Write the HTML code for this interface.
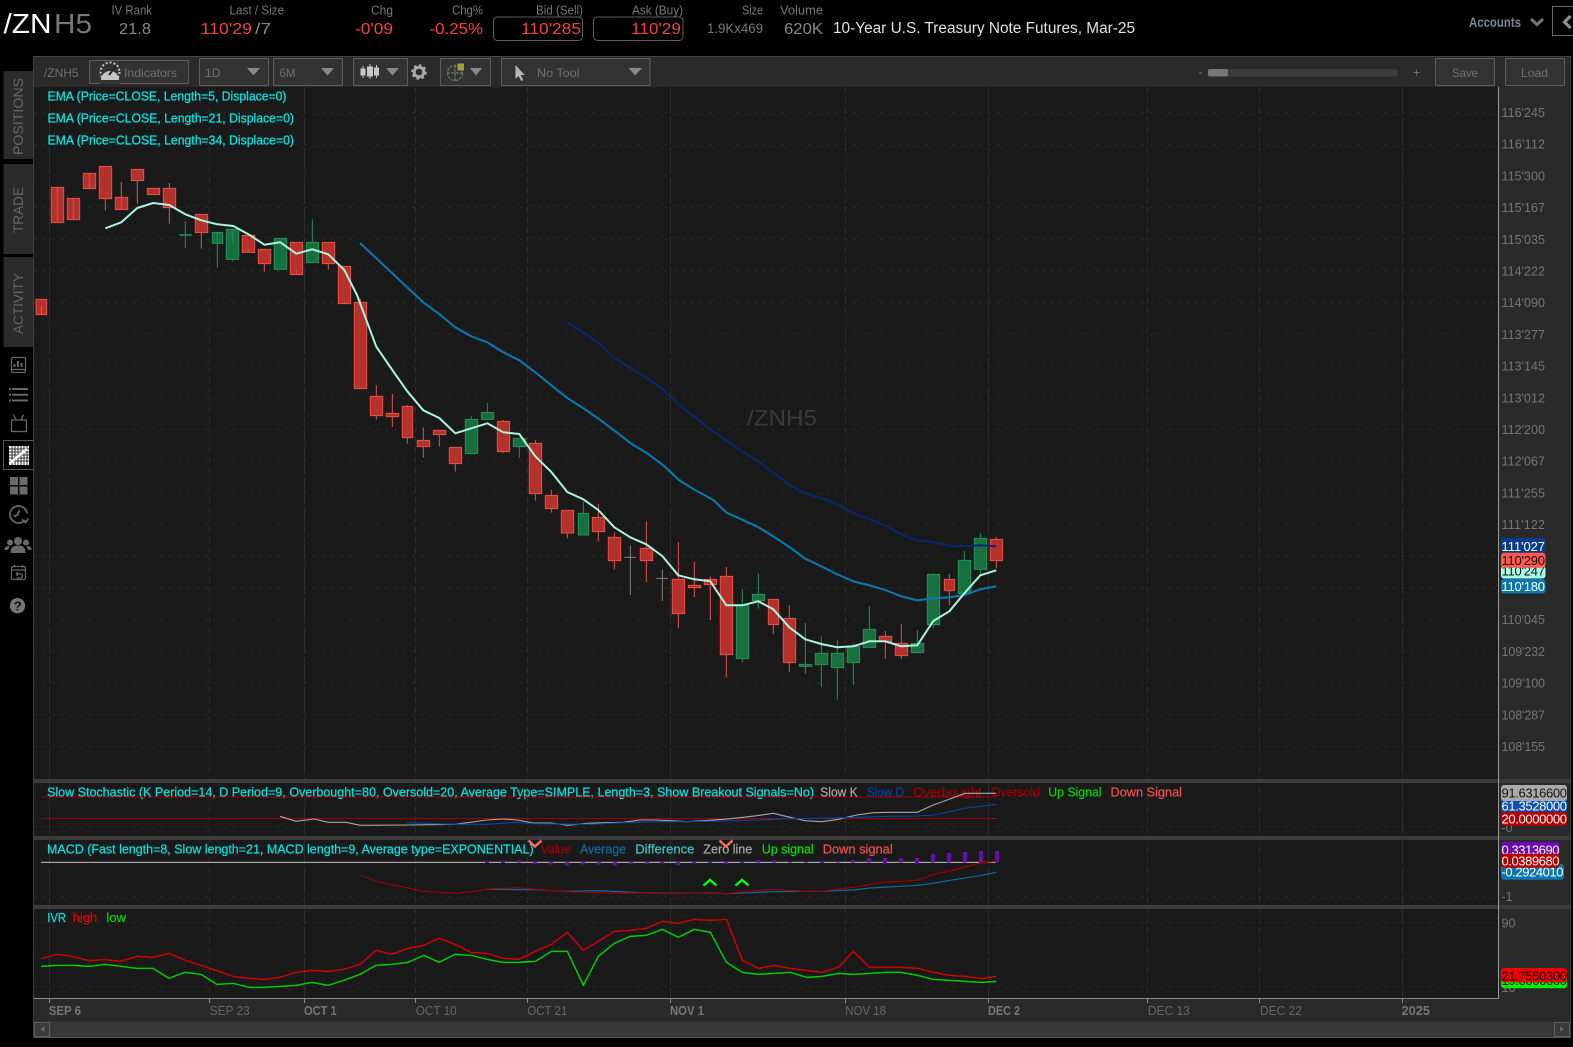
<!DOCTYPE html>
<html>
<head>
<meta charset="utf-8">
<title>/ZNH5 chart</title>
<style>
html,body{margin:0;padding:0;background:#000;width:1573px;height:1047px;overflow:hidden}
svg{display:block}
text{font-family:"Liberation Sans",sans-serif}
.lb{font-size:12.5px;fill:#777}
.v{font-size:16px;fill:#888}
.r{font-size:16px;fill:#f6423a}
.tb{font-size:12px;fill:#707070}
.ema{font-size:12.5px;fill:#00e6e6;stroke:#00e6e6;stroke-width:.25px}
.px{font-size:12.5px;fill:#757575}
.d{font-size:12.5px;fill:#666}
.db{font-size:12.5px;fill:#777;font-weight:bold}
.f{font-size:13px}
.leg{font-size:13px;stroke:currentColor;stroke-width:.2px}
.side{font-size:14px;fill:#666}
.rb{fill:#b5312b;stroke:#ea5048;stroke-width:3}
.gb{fill:#19703f;stroke:#23915a;stroke-width:3}
.rw{fill:none;stroke:#ea5048;stroke-width:3}
.gw{fill:none;stroke:#1f9058;stroke-width:3}
.hw{fill:none;stroke:#808080;stroke-width:3}
.pl{fill:none;stroke-linejoin:round;vector-effect:non-scaling-stroke}
.box{fill:#333;stroke:#5c5c5c;stroke-width:1}
.tri{fill:#8a8a8a}
.ic{fill:#6a6a6a}
</style>
</head>
<body>
<svg width="1573" height="1047" viewBox="0 0 1573 1047" xmlns="http://www.w3.org/2000/svg">
<rect width="1573" height="1047" fill="#000"/>

<!-- Header -->
<text x="3.5" y="33" font-size="28" fill="#fff" textLength="48" lengthAdjust="spacingAndGlyphs">/ZN</text>
<text x="54" y="33" font-size="28" fill="#777" textLength="38" lengthAdjust="spacingAndGlyphs">H5</text>
<text class="lb" x="111.5" y="14.5" textLength="40.5" lengthAdjust="spacingAndGlyphs">IV Rank</text>
<text class="v" x="119" y="34" textLength="32" lengthAdjust="spacingAndGlyphs">21.8</text>
<text class="lb" x="229.5" y="14.5" textLength="54.5" lengthAdjust="spacingAndGlyphs">Last / Size</text>
<text class="r" x="200.5" y="34" textLength="51.5" lengthAdjust="spacingAndGlyphs">110'29</text>
<text class="v" x="255" y="34" textLength="16" lengthAdjust="spacingAndGlyphs">/7</text>
<text class="lb" x="371" y="14.5" textLength="22" lengthAdjust="spacingAndGlyphs">Chg</text>
<text class="r" x="355" y="34" textLength="38" lengthAdjust="spacingAndGlyphs">-0'09</text>
<text class="lb" x="452" y="14.5" textLength="31" lengthAdjust="spacingAndGlyphs">Chg%</text>
<text class="r" x="429.5" y="34" textLength="53.5" lengthAdjust="spacingAndGlyphs">-0.25%</text>
<text class="lb" x="536" y="14.5" textLength="47" lengthAdjust="spacingAndGlyphs">Bid (Sell)</text>
<rect x="493.5" y="17" width="89" height="23.5" rx="4" fill="none" stroke="#5e5e5e"/>
<text class="r" x="521" y="34" textLength="60" lengthAdjust="spacingAndGlyphs">110'285</text>
<text class="lb" x="632" y="14.5" textLength="51" lengthAdjust="spacingAndGlyphs">Ask (Buy)</text>
<rect x="593.5" y="17" width="89.5" height="23.5" rx="4" fill="none" stroke="#5e5e5e"/>
<text class="r" x="631" y="34" textLength="50" lengthAdjust="spacingAndGlyphs">110'29</text>
<text class="lb" x="742" y="14.5" textLength="21" lengthAdjust="spacingAndGlyphs">Size</text>
<text x="707" y="33" font-size="13.5" fill="#777" textLength="56" lengthAdjust="spacingAndGlyphs">1.9Kx469</text>
<text class="lb" x="780" y="14.5" textLength="43" lengthAdjust="spacingAndGlyphs">Volume</text>
<text class="v" x="784" y="34" textLength="39" lengthAdjust="spacingAndGlyphs">620K</text>
<text x="833" y="33" font-size="15.5" fill="#e2e2e2" textLength="302" lengthAdjust="spacingAndGlyphs">10-Year U.S. Treasury Note Futures, Mar-25</text>
<text x="1469" y="27" font-size="14" font-weight="bold" fill="#7a8794" textLength="52" lengthAdjust="spacingAndGlyphs">Accounts</text>
<path d="M1531 19l6 5.5l6-5.5" fill="none" stroke="#6f7478" stroke-width="3.2"/>
<rect x="1552.5" y="6.5" width="30" height="29" fill="none" stroke="#6a6a6a"/>
<path d="M1570.5 16l-6 6l6 6" fill="none" stroke="#8a8f94" stroke-width="3.2"/>

<!-- Sidebar tabs -->
<rect x="3.5" y="71" width="29.5" height="88" fill="#2b2b2b"/>
<rect x="3.5" y="164" width="29.5" height="90" fill="#2b2b2b"/>
<rect x="3.5" y="257" width="29.5" height="90" fill="#2b2b2b"/>
<text class="side" transform="translate(23,155) rotate(-90)" textLength="77" lengthAdjust="spacingAndGlyphs">POSITIONS</text>
<text class="side" transform="translate(23,233) rotate(-90)" textLength="46" lengthAdjust="spacingAndGlyphs">TRADE</text>
<text class="side" transform="translate(23,334) rotate(-90)" textLength="61" lengthAdjust="spacingAndGlyphs">ACTIVITY</text>

<!-- Sidebar icons -->
<g fill="none" stroke="#666" stroke-width="1.3">
<rect x="11.5" y="357.5" width="14" height="15" rx="1.5"/>
<path d="M14.5 367v-3M18 367v-6M21.5 367v-4" stroke-width="2"/>
<path d="M11.5 369.5h14"/>
<path d="M12 389h16M12 394.8h16M12 400.5h16" stroke-width="2"/>
<path d="M9 389h2M9 394.8h2M9 400.5h2" stroke-width="2"/>
<rect x="11.5" y="420" width="15" height="11.5"/>
<path d="M16 420l-2.5-5.5M21 420l2.5-5.5"/>
</g>
<rect x="3.5" y="440.5" width="30" height="29" fill="#000" stroke="#555"/>
<rect x="33" y="441" width="2" height="28" fill="#000"/>
<g>
<rect x="9" y="446" width="20" height="19" fill="#fff"/>
<path d="M12 446v19M15 446v19M18 446v19M21 446v19M24 446v19M27 446v19M9 449h20M9 452h20M9 455h20M9 458h20M9 461h20" stroke="#333" stroke-width="1"/>
<path d="M10 463l17-14" stroke="#fff" stroke-width="2.6"/>
</g>
<g class="ic">
<rect x="10" y="477" width="8" height="8" class="ic"/><rect x="19.5" y="477" width="8" height="8" class="ic"/>
<rect x="10" y="486.5" width="8" height="8" class="ic"/><rect x="19.5" y="486.5" width="8" height="8" class="ic"/>
</g>
<g fill="none" stroke="#666" stroke-width="1.8">
<path d="M25 520a8.5 8.5 0 1 1 2-6.5"/>
<path d="M19.5 510l-2 5l-4 1.5"/>
<path d="M22 519.5l3.5 3l3-4"/>
</g>
<g fill="#6a6a6a">
<circle cx="18" cy="541" r="4"/><path d="M10.5 553c0-5 2-7.5 7.5-7.5s7.5 2.5 7.5 7.5z"/>
<circle cx="10" cy="542.5" r="3"/><path d="M4 549.5c1-3 3-3.5 5.5-3.5l-1.5 4z"/>
<circle cx="26" cy="542.5" r="3"/><path d="M32 549.5c-1-3-3-3.5-5.5-3.5l1.5 4z"/>
</g>
<g fill="none" stroke="#666" stroke-width="1.3">
<rect x="11.5" y="566.5" width="14" height="13" rx="1.5"/>
<path d="M11.5 570h14M14.5 565v2.5M22.5 565v2.5"/>
<path d="M16 574h4.5a2 2 0 0 1 0 4h-4M16 574l2-1.8M16 574l2 1.8"/>
</g>
<circle cx="17.5" cy="605.7" r="7.7" fill="#777"/>
<text x="13.8" y="610.5" font-size="13" font-weight="bold" fill="#111">?</text>

<!-- Panel base -->
<rect x="33" y="56" width="1538" height="982" fill="#2a2a2a"/>
<rect x="33" y="56" width="1538" height="1" fill="#444"/>
<rect x="34" y="87" width="1464.5" height="911.5" fill="#1a1a1a"/>
<rect x="33" y="56" width="1" height="982" fill="#3f3f3f"/>
<rect x="1570" y="56" width="1" height="982" fill="#3a3a3a"/>

<!-- Grid -->
<g stroke="#2d2d2d" stroke-width="1" fill="none">
<path stroke-dasharray="27 3" d="M49.5 87V998M304.5 87V998M670.5 87V998M988.5 87V998M1402.5 87V998"/>
<path stroke-dasharray="6 4" d="M209.5 87V998M415.5 87V998M527.5 87V998M845.5 87V998M1147.5 87V998M1259.5 87V998"/>
<path stroke="#292929" stroke-dasharray="3 6" d="M34 112.5H1498M34 144.5H1498M34 176H1498M34 207.5H1498M34 239.5H1498M34 271H1498M34 303H1498M34 334.5H1498M34 366H1498M34 398H1498M34 429.5H1498M34 461H1498M34 493H1498M34 524.5H1498M34 556H1498M34 588H1498M34 619.5H1498M34 651H1498M34 683H1498M34 714.5H1498M34 746.5H1498M34 826.5H1498M34 896.5H1498M34 922.5H1498M34 986.5H1498"/>
</g>
<text x="747" y="425.5" font-size="22" fill="#3b3b3b" textLength="70" lengthAdjust="spacingAndGlyphs">/ZNH5</text>

<!-- Toolbar -->
<text class="tb" x="44" y="77" textLength="34.5" lengthAdjust="spacingAndGlyphs">/ZNH5</text>
<rect class="box" x="89.5" y="60.5" width="99" height="23"/>
<path d="M101 80a9 9 0 1 1 18 0z" fill="#c4c4c4"/>
<circle cx="110" cy="72" r="9.5" fill="none" stroke="#c4c4c4" stroke-width="2" stroke-dasharray="2 2"/>
<path d="M109 75l7-9" stroke="#2a2a2a" stroke-width="2"/>
<rect x="100" y="80" width="20" height="4" fill="#333"/>
<text class="tb" x="124" y="77" textLength="53" lengthAdjust="spacingAndGlyphs">Indicators</text>
<rect class="box" x="199.5" y="58.5" width="69" height="27"/>
<text class="tb" x="205" y="77" textLength="15.5" lengthAdjust="spacingAndGlyphs">1D</text>
<path class="tri" d="M247 68h13l-6.5 7.500z"/>
<rect class="box" x="273.5" y="58.5" width="69" height="27"/>
<text class="tb" x="279.5" y="77" textLength="16" lengthAdjust="spacingAndGlyphs">6M</text>
<path class="tri" d="M321 68h13l-6.5 7.500z"/>
<rect class="box" x="353.5" y="58.5" width="54" height="27"/>
<g stroke="#c8c8c8" stroke-width="1">
<path d="M363 66v12M370 64v15M376.5 65v13"/>
<rect x="361" y="69" width="4" height="6" fill="#c8c8c8"/>
<rect x="367.5" y="67" width="5" height="9" fill="#c8c8c8"/>
<rect x="374.5" y="68" width="4" height="7" fill="#c8c8c8"/>
</g>
<path class="tri" d="M386 68h13l-6.5 7.500z"/>
<circle cx="419" cy="72" r="4.8" fill="none" stroke="#a8a8a8" stroke-width="3"/>
<circle cx="419" cy="72" r="6.7" fill="none" stroke="#a8a8a8" stroke-width="2.2" stroke-dasharray="2.6 2.6"/>
<rect class="box" x="440.5" y="58.5" width="50" height="27"/>
<g fill="none" stroke="#6f7c74" stroke-width="1.2" stroke-dasharray="3 1.2">
<circle cx="455" cy="73" r="7.5"/>
<path d="M447 73h16M455 65v16"/>
</g>
<rect x="457.5" y="63.5" width="6.5" height="7" fill="#a8a030"/>
<path d="M470 68h12l-6 7.500z" class="tri"/>
<rect class="box" x="501.5" y="58.5" width="148.5" height="27"/>
<path d="M515.5 65v14l3-3l2.8 5l2-1l-2.6-5h4z" fill="#b8b8b8"/>
<text class="tb" x="537" y="77" textLength="42.5" lengthAdjust="spacingAndGlyphs">No Tool</text>
<path class="tri" d="M628.5 68h13.500l-6.700 7.500z"/>
<text x="1198.5" y="76" font-size="12" fill="#777">-</text>
<rect x="1208" y="69" width="190" height="7.5" rx="3" fill="#3c3c3c"/>
<rect x="1208" y="69" width="20" height="7.5" rx="2" fill="#777"/>
<text x="1413" y="76.5" font-size="12" fill="#777">+</text>
<rect class="box" x="1435.5" y="58.5" width="59" height="27"/>
<text class="tb" x="1452" y="77" textLength="26" lengthAdjust="spacingAndGlyphs">Save</text>
<rect class="box" x="1505.5" y="58.5" width="59" height="27"/>
<text class="tb" x="1521" y="77" textLength="27" lengthAdjust="spacingAndGlyphs">Load</text>

<!-- Study labels -->
<text class="ema" x="47.5" y="100.5" textLength="239" lengthAdjust="spacingAndGlyphs">EMA (Price=CLOSE, Length=5, Displace=0)</text>
<text class="ema" x="47.5" y="122.5" textLength="246.5" lengthAdjust="spacingAndGlyphs">EMA (Price=CLOSE, Length=21, Displace=0)</text>
<text class="ema" x="47.5" y="144.5" textLength="246.5" lengthAdjust="spacingAndGlyphs">EMA (Price=CLOSE, Length=34, Displace=0)</text>

<!-- Candles A -->
<g transform="translate(30,160) scale(.33333)">
<path class="rb" d="M18 418h32v46h-32zM64 82h37v106h-37zM112 115h37v64h-37zM160 40h37v46h-37zM208 19h37v97h-37zM256 112h37v37h-37zM304 28h37v34h-37zM352 85h37v19h-37zM400 85h37v58h-37zM496 163h37v55h-37zM637 226h37v51h-37zM685 268h37v43h-37zM781 247h37v97h-37zM877 247h37v64h-37zM925 319h37v112h-37z"/>
<path class="rw" d="M34 438V464M82 82V188M130 115V179M178 40V86M226 116V152M274 66V149M322 62V131M418 69V85M418 143V191M514 218V266M655 268V277M703 311V335M799 332V344M895 311V329M943 426V431"/>
<path class="gb" d="M547 217h31v33h-31zM589 208h37v90h-37zM733 235h37v93h-37zM829 247h37v61h-37z"/>
<path class="gw" d="M466 184V264M562 217V323M607 208V248M607 298V305M847 178V247"/>
<path d="M448 225h37" stroke="#1f9058" stroke-width="5" fill="none"/>
</g>
<!-- Candles B -->
<g transform="translate(350,290) scale(.33333)">
<path class="rb" d="M13 37h37v259h-37zM61 319h37v58h-37zM109 370h37v10h-37zM157 349h31v94h-31zM202 451h37v19h-37zM250 421h37v13h-37zM298 472h37v49h-37zM442 394h37v91h-37zM538 460h37v151h-37zM586 616h37v40h-37zM634 661h37v68h-37z"/>
<path class="rw" d="M31 27V37M79 286V319M79 377V389M127 312V370M127 380V411M172 345V349M172 443V461M220 412V451M220 470V503M268 434V470M316 521V545M460 390V394M460 485V489M556 450V460M556 611V632M604 600V616M604 656V668M652 729V745"/>
<path class="gb" d="M346 388h37v103h-37zM394 367h37v21h-37zM490 445h37v25h-37zM685 670h31v65h-31z"/>
<path class="gw" d="M364 379V388M412 339V367M508 470V503M700 635V670"/>
</g>
<!-- Candles C -->
<g transform="translate(590,500) scale(.33333)">
<path class="rb" d="M7 52h37v43h-37zM55 112h37v70h-37zM151 145h37v37h-37zM247 238h37v103h-37zM295 256h37v7h-37zM343 238h37v16h-37zM391 229h37v235h-37zM535 298h31v76h-31zM580 355h37v133h-37zM868 409h37v15h-37zM916 430h37v37h-37zM1063 238h31v34h-31zM1201 118h37v64h-37z"/>
<path class="rw" d="M25 12V52M25 95V125M73 97V112M73 182V209M169 63V145M169 182V246M265 126V238M265 341V384M313 186V256M313 263V291M361 229V238M361 254V360M409 201V229M409 464V533M550 374V402M598 315V355M598 488V516M886 393V409M886 424V477M934 372V430M934 467V477M1078 222V238M1078 272V315M1219 112V118M1219 182V204"/>
<path class="hw" d="M103 172h35M121 136V285M199 235h35M217 208V303"/>
<path class="gb" d="M439 316h37v160h-37zM487 283h37v19h-37zM628 493h37v6h-37zM676 460h37v34h-37zM724 460h37v43h-37zM772 440h37v48h-37zM820 388h37v54h-37zM964 430h37v28h-37zM1012 223h37v151h-37zM1105 181h37v100h-37zM1153 115h37v93h-37z"/>
<path class="gw" d="M457 267V316M457 476V486M505 219V283M505 302V326M646 369V493M646 499V522M694 408V460M694 494V561M742 420V460M742 503V600M790 430V440M790 488V555M838 318V388M982 390V430M982 458V461M1030 219V223M1030 374V384M1123 153V181M1171 99V115M1171 208V226"/>
</g>

<!-- EMA 34 -->
<polyline class="pl" stroke="#06296e" stroke-width="2.1" points="567,322 583,332 599,343.3 615,358.3 631,368.3 647,378.3 663,389.3 679,404.7 695,417 711,430 727,441 743,452 759,462 775,474 791,486 807,494 827,500 838.3,505 854.3,513.7 870.3,519.3 886.3,526.3 901.3,534.3 917.3,540.3 933.3,542.3 949.3,545.7 965.3,546.3 980.3,545.3 996.3,546.3"/>
<!-- EMA 21 -->
<polyline class="pl" stroke="#0878ae" stroke-width="2.1" points="360,243 376,258 392,273 410,290 423.3,302.3 439.3,314 455.3,327.3 471.3,336.3 487.3,342.3 503.3,352.3 519.3,360.3 535.3,372.3 551.3,385.3 567.3,398 583.3,408.3 599.3,419.3 615.3,431.3 631.3,443.7 647.3,453.3 663.3,465.3 679.3,480.3 695,490 713.3,500 726.7,512.7 742.7,520 758.7,527.3 774.7,537.3 790.7,548 805.3,558.7 821.3,566.3 837.3,574.3 853.3,581.3 869.3,585.3 885.3,590 901.3,596.3 917.3,600.3 933.3,598.3 949.3,597.3 964.3,595 980.3,589.3 996.3,586.3"/>
<!-- EMA 5 -->
<polyline class="pl" stroke="#a8f5e0" stroke-width="2" points="105.3,228.3 121.3,222.3 137.3,208 153.3,203 169.3,205 185.3,214.3 201.3,220.3 217.3,224.3 233.3,226 249.3,234.7 264.3,244.7 280.3,242.3 296.3,253.7 312.3,249.3 328.3,254.3 344.3,270 357,295 376.3,346.7 392.3,370 407.3,391.3 423.3,410.3 439.3,418 455.3,433.3 471.3,428.3 487.3,423.3 503.3,432.3 519.3,434 535.3,456.3 551.3,472 567.3,492 583.3,499.3 598.3,510 614.3,527.3 630.3,537.3 646.3,544.3 662.3,556 678.3,575.3 694.3,579.3 710.3,581.3 726.3,605.3 742.3,605.3 758.3,601.3 773.3,609.3 789.3,627.3 805.3,639.3 821.3,644 837.3,647.3 853.3,646.3 869.3,641.3 885.3,641.3 901.3,646.3 917.3,645.3 933.3,621 949.3,611.3 964.3,593.3 980.3,575.3 996.3,570.3"/>

<!-- Stochastic pane -->
<rect x="34" y="779" width="1537" height="4" fill="#3c3c3c"/>
<text class="leg" x="47" y="796.5" fill="#00e6e6" color="#00e6e6" textLength="767" lengthAdjust="spacingAndGlyphs">Slow Stochastic (K Period=14, D Period=9, Overbought=80, Oversold=20, Average Type=SIMPLE, Length=3, Show Breakout Signals=No)</text>
<text class="leg" x="820.3" y="796.5" fill="#a8a8a8" color="#a8a8a8" textLength="37.4" lengthAdjust="spacingAndGlyphs">Slow K</text>
<text class="leg" x="866.7" y="796.5" fill="#0a3fa0" color="#0a3fa0" textLength="37.3" lengthAdjust="spacingAndGlyphs">Slow D</text>
<text class="leg" x="913.3" y="796.5" fill="#a00000" color="#a00000" textLength="68.4" lengthAdjust="spacingAndGlyphs">Overbought</text>
<text class="leg" x="990.7" y="796.5" fill="#a00000" color="#a00000" textLength="49.3" lengthAdjust="spacingAndGlyphs">Oversold</text>
<text class="leg" x="1048.3" y="796.5" fill="#00d800" color="#00d800" textLength="53.2" lengthAdjust="spacingAndGlyphs">Up Signal</text>
<text class="leg" x="1110.5" y="796.5" fill="#f05050" color="#f05050" textLength="71.5" lengthAdjust="spacingAndGlyphs">Down Signal</text>
<path d="M41 797H996M41 818.5H996" stroke="#a00000" stroke-width="1" fill="none"/>
<polyline class="pl" stroke="#a8a8a8" stroke-width="1.1" points="280,816.3 296,821.3 314,819 328,822.3 346,822.3 360.4,825.3 408.6,825 455,824.3 487,820 503,819 517.4,820 533.4,823 551.4,823 567.4,825.3 587,823.3 606.7,822.7 623.3,822.3 640,820 656.7,820 670,820.7 686.7,821.7 703.3,820.7 723.3,819.3 740,817.7 756.7,815.7 773.3,813.3 790,817.3 805,820.7 821.7,821.7 838.3,819.3 856.7,815 873.3,812.7 890,812.3 917.3,812.3 933.3,805 950,799 965,793.3 996.3,793.3"/>
<polyline class="pl" stroke="#0a45a8" stroke-width="1.1" points="406.8,822.7 455,824.3 487,824.3 517.4,822.3 533.4,823.7 590,824.3 623.3,822.7 656.7,821.7 686.7,821.7 723.3,821 756.7,820 790,818.7 823.3,818.3 856.7,817.3 890,816.3 917.3,816 933.3,815 950,811.7 965,808.3 996.3,804.3"/>

<!-- MACD pane -->
<rect x="34" y="836" width="1537" height="4" fill="#3c3c3c"/>
<text class="leg" x="47" y="853.5" fill="#00e6e6" color="#00e6e6" textLength="486.6" lengthAdjust="spacingAndGlyphs">MACD (Fast length=8, Slow length=21, MACD length=9, Average type=EXPONENTIAL)</text>
<text class="leg" x="540.7" y="853.5" fill="#a00000" color="#a00000" textLength="30.3" lengthAdjust="spacingAndGlyphs">Value</text>
<text class="leg" x="580" y="853.5" fill="#0a6e9e" color="#0a6e9e" textLength="46" lengthAdjust="spacingAndGlyphs">Average</text>
<text class="leg" x="635.3" y="853.5" fill="#40c8c8" color="#40c8c8" textLength="59" lengthAdjust="spacingAndGlyphs">Difference</text>
<text class="leg" x="703.3" y="853.5" fill="#a8a8a8" color="#a8a8a8" textLength="49" lengthAdjust="spacingAndGlyphs">Zero line</text>
<text class="leg" x="761.7" y="853.5" fill="#00e000" color="#00e000" textLength="52" lengthAdjust="spacingAndGlyphs">Up signal</text>
<text class="leg" x="822.7" y="853.5" fill="#f05050" color="#f05050" textLength="70" lengthAdjust="spacingAndGlyphs">Down signal</text>
<path d="M528.5 840.5l6.5 6l6.5-6M719.5 840.5l6.5 6l6.5-6" stroke="#ff6a62" stroke-width="2.4" fill="none"/>
<rect x="41" y="861.8" width="955" height="1.1" fill="#b8b8b8"/>
<g fill="#6a0cb0">
<rect x="485" y="861" width="4" height="2"/><rect x="501" y="861" width="4" height="2"/><rect x="517" y="860" width="4" height="2.5"/>
<rect x="533" y="862" width="4" height="2"/><rect x="549" y="862" width="4" height="2.5"/><rect x="565" y="862" width="4" height="3.5"/><rect x="581" y="862" width="4" height="2.5"/>
<rect x="597" y="862" width="4" height="2.7"/><rect x="613" y="862" width="4" height="3.3"/><rect x="629" y="862" width="4" height="2.3"/><rect x="645" y="862" width="4" height="2.3"/><rect x="660" y="862" width="4" height="1.7"/><rect x="676" y="862" width="4" height="3.3"/><rect x="692" y="862" width="4" height="1.7"/><rect x="708" y="862" width="4" height="1"/><rect x="724" y="862" width="4" height="2.3"/><rect x="740" y="862" width="4" height="1"/>
<rect x="756" y="860" width="4" height="2.5"/><rect x="772" y="860" width="4" height="2.5"/><rect x="788" y="861.5" width="4" height="1"/><rect x="804" y="861.5" width="4" height="1"/><rect x="820" y="862" width="4" height="1.3"/><rect x="836" y="861" width="4" height="1.5"/><rect x="851" y="860" width="4" height="2.5"/><rect x="867" y="858" width="4" height="4.5"/><rect x="883" y="858" width="4" height="5.5"/><rect x="899" y="858" width="4" height="4.5"/><rect x="915" y="858" width="4" height="5.5"/><rect x="931" y="854" width="4" height="8.5"/><rect x="947" y="853" width="4" height="9.5"/><rect x="963" y="852" width="4" height="10.5"/><rect x="979" y="851" width="4" height="11.5"/><rect x="995" y="851" width="4" height="11.5"/>
</g>
<polyline class="pl" stroke="#0a6e9e" stroke-width="1.2" points="487,889.3 533.4,889.7 566,891.3 590,890.7 606.7,891 640,892.7 673.3,893.3 710,892.7 726.7,893.7 773.3,891.7 820,891.3 853.3,890 870,888 917.3,885.3 933.3,883.3 950,880.3 980.3,875.7 996.3,872.3"/>
<polyline class="pl" stroke="#a00000" stroke-width="1.2" points="360.4,875 378,881.7 401.4,886.7 423,891.3 455,893.3 473,891.7 487,889 517.4,887.7 533.4,889 565.7,891.7 590,892.3 606.7,893 640,893 673.3,893.7 710,892.3 726.7,893.7 746.7,891.3 773.3,889.3 803.3,891.3 820,891.3 853.3,887.3 883.3,882.3 917.3,880.3 933.3,874.3 950,871 965,867 980.3,863 996.3,861"/>
<path d="M703.5 885.5l6.5-5.5l6.5 5.5M735.5 885.5l6.5-5.5l6.5 5.5" stroke="#00ff00" stroke-width="2.4" fill="none"/>

<!-- IVR pane -->
<rect x="34" y="905" width="1537" height="4" fill="#3c3c3c"/>
<text class="leg" x="47.3" y="922" fill="#00e6e6" color="#00e6e6" textLength="18.7" lengthAdjust="spacingAndGlyphs">IVR</text>
<text class="leg" x="72.7" y="922" fill="#e00000" color="#e00000" textLength="24.6" lengthAdjust="spacingAndGlyphs">high</text>
<text class="leg" x="106.3" y="922" fill="#00d800" color="#00d800" textLength="19.7" lengthAdjust="spacingAndGlyphs">low</text>
<g transform="translate(30,900) scale(.33333)">
<polyline class="pl" stroke="#d00000" stroke-width="1.5" points="33,176 81,163 129,170 177,182 225,179 273,184 321,169 369,172 417,160 465,181 513,196 561,212 609,229 657,235 702,238 750,232 798,217 846,211 894,214 942,208 990,193 1038,151 1086,163 1134,145 1182,136 1227,115 1275,133 1323,157 1371,160 1419,175 1467,178 1500,163"/>
<polyline class="pl" stroke="#00cc00" stroke-width="1.5" points="33,199 81,196 129,196 177,199 225,193 273,199 321,205 369,205 417,235 465,217 513,223 561,253 609,250 657,262 702,262 750,259 798,256 846,247 894,256 942,241 990,223 1038,196 1086,193 1134,187 1182,166 1227,187 1275,163 1323,166 1371,178 1419,187 1467,187 1500,184"/>
</g>
<g transform="translate(520,900) scale(.33333)">
<polyline class="pl" stroke="#d00000" stroke-width="1.5" points="0,177 46,154 94,133 142,97 190,151 235,124 283,94 331,91 379,85 427,64 475,70 523,58 571,61 619,58 667,181 715,205 763,196 811,205 859,211 907,217 955,202 1000,154 1048,202 1096,202 1144,202 1192,205 1240,217 1288,226 1336,229 1384,236 1429,229"/>
<polyline class="pl" stroke="#00cc00" stroke-width="1.5" points="0,187 46,184 94,154 142,154 190,256 235,169 283,130 331,109 379,106 427,88 475,112 523,88 571,97 619,187 667,217 715,223 763,220 811,217 859,232 907,229 955,220 1000,223 1048,220 1096,217 1144,217 1192,226 1240,238 1288,241 1336,244 1384,247 1429,244"/>
</g>

<!-- Axes -->
<rect x="1498" y="87" width="1" height="912" fill="#9a9a9a"/>
<rect x="34" y="998" width="1465" height="1" fill="#8a8a8a"/>
<path d="M49.5 999v4M209.5 999v4M304.5 999v4M415.5 999v4M527.5 999v4M670.5 999v4M845.5 999v4M988.5 999v4M1147.5 999v4M1259.5 999v4M1402.5 999v4" stroke="#8a8a8a" fill="none"/>

<!-- Price labels -->
<text class="px" x="1501.5" y="117" textLength="43.5" lengthAdjust="spacing">116'245</text>
<text class="px" x="1501.5" y="148.7" textLength="43.5" lengthAdjust="spacing">116'112</text>
<text class="px" x="1501.5" y="180.4" textLength="43.5" lengthAdjust="spacing">115'300</text>
<text class="px" x="1501.5" y="212.1" textLength="43.5" lengthAdjust="spacing">115'167</text>
<text class="px" x="1501.5" y="243.8" textLength="43.5" lengthAdjust="spacing">115'035</text>
<text class="px" x="1501.5" y="275.5" textLength="43.5" lengthAdjust="spacing">114'222</text>
<text class="px" x="1501.5" y="307.2" textLength="43.5" lengthAdjust="spacing">114'090</text>
<text class="px" x="1501.5" y="338.9" textLength="43.5" lengthAdjust="spacing">113'277</text>
<text class="px" x="1501.5" y="370.6" textLength="43.5" lengthAdjust="spacing">113'145</text>
<text class="px" x="1501.5" y="402.3" textLength="43.5" lengthAdjust="spacing">113'012</text>
<text class="px" x="1501.5" y="434" textLength="43.5" lengthAdjust="spacing">112'200</text>
<text class="px" x="1501.5" y="465.7" textLength="43.5" lengthAdjust="spacing">112'067</text>
<text class="px" x="1501.5" y="497.4" textLength="43.5" lengthAdjust="spacing">111'255</text>
<text class="px" x="1501.5" y="529.1" textLength="43.5" lengthAdjust="spacing">111'122</text>
<text class="px" x="1501.5" y="624.2" textLength="43.5" lengthAdjust="spacing">110'045</text>
<text class="px" x="1501.5" y="655.9" textLength="43.5" lengthAdjust="spacing">109'232</text>
<text class="px" x="1501.5" y="687.6" textLength="43.5" lengthAdjust="spacing">109'100</text>
<text class="px" x="1501.5" y="719.3" textLength="43.5" lengthAdjust="spacing">108'287</text>
<text class="px" x="1501.5" y="751" textLength="43.5" lengthAdjust="spacing">108'155</text>

<!-- Price flags -->
<rect x="1501" y="538" width="44.5" height="15" rx="3" fill="#0a3a8c"/>
<text class="f" x="1501.5" y="551" fill="#fff" textLength="43.5" lengthAdjust="spacing">111'027</text>
<rect x="1501" y="566" width="44.5" height="12.5" rx="3" fill="#a8ffe8"/>
<text class="f" x="1501.5" y="575.5" fill="#111" textLength="43.5" lengthAdjust="spacing">110'247</text>
<rect x="1501" y="552.7" width="44.5" height="15" rx="3" fill="#ff5a50"/>
<text class="f" x="1501.5" y="565" fill="#111" textLength="43.5" lengthAdjust="spacing">110'290</text>
<rect x="1501" y="579" width="44.5" height="14.5" rx="3" fill="#0a78ae"/>
<text class="f" x="1501.5" y="591" fill="#fff" textLength="43.5" lengthAdjust="spacing">110'180</text>

<text class="px" x="1501.5" y="832">-0</text>
<rect x="1501" y="798" width="66" height="14" fill="#0a50b5"/>
<text class="f" x="1501.5" y="810.3" fill="#fff" textLength="65.5" lengthAdjust="spacing">61.3528000</text>
<rect x="1501" y="785" width="66" height="16" rx="3" fill="#aaa"/>
<text class="f" x="1501.5" y="797.7" fill="#111" textLength="65.5" lengthAdjust="spacing">91.6316600</text>
<rect x="1501" y="811.7" width="66" height="14" rx="3" fill="#b40000"/>
<text class="f" x="1501.5" y="823.3" fill="#fff" textLength="65.5" lengthAdjust="spacing">20.0000000</text>

<rect x="1501" y="842" width="58.7" height="13" rx="3" fill="#6a0cb0"/>
<text class="f" x="1501.5" y="854.5" fill="#fff" textLength="58" lengthAdjust="spacing">0.3313690</text>
<rect x="1501" y="864" width="63" height="15.7" rx="3" fill="#0a78ae"/>
<text class="f" x="1501.5" y="876.7" fill="#fff" textLength="62" lengthAdjust="spacing">-0.2924010</text>
<rect x="1501" y="853.7" width="58.7" height="14" rx="3" fill="#b40000"/>
<text class="f" x="1501.5" y="865.5" fill="#fff" textLength="58" lengthAdjust="spacing">0.0389680</text>
<text class="px" x="1501.5" y="901">-1</text>

<text class="px" x="1501.5" y="927.5">90</text>
<text class="px" x="1501.5" y="992">10</text>
<rect x="1501" y="975" width="66" height="13.3" rx="3" fill="#00f000"/>
<text class="f" x="1501.5" y="985" fill="#111" textLength="65.5" lengthAdjust="spacing">19.0000000</text>
<rect x="1501" y="968" width="66" height="14.3" rx="3" fill="#f00000"/>
<text class="f" x="1501.5" y="980.5" fill="#111" textLength="65.5" lengthAdjust="spacing">21.7550300</text>

<!-- Dates -->
<text class="db" x="48.7" y="1015" textLength="32.3" lengthAdjust="spacingAndGlyphs">SEP 6</text>
<text class="d" x="209.7" y="1015" textLength="40" lengthAdjust="spacingAndGlyphs">SEP 23</text>
<text class="db" x="304" y="1015" textLength="32.7" lengthAdjust="spacingAndGlyphs">OCT 1</text>
<text class="d" x="415.7" y="1015" textLength="41" lengthAdjust="spacingAndGlyphs">OCT 10</text>
<text class="d" x="527.3" y="1015" textLength="40" lengthAdjust="spacingAndGlyphs">OCT 21</text>
<text class="db" x="670" y="1015" textLength="34" lengthAdjust="spacingAndGlyphs">NOV 1</text>
<text class="d" x="845.3" y="1015" textLength="40.7" lengthAdjust="spacingAndGlyphs">NOV 18</text>
<text class="db" x="988" y="1015" textLength="32" lengthAdjust="spacingAndGlyphs">DEC 2</text>
<text class="d" x="1147.7" y="1015" textLength="42.3" lengthAdjust="spacingAndGlyphs">DEC 13</text>
<text class="d" x="1260" y="1015" textLength="42" lengthAdjust="spacingAndGlyphs">DEC 22</text>
<text class="db" x="1401.5" y="1015" textLength="28.5" lengthAdjust="spacingAndGlyphs">2025</text>

<!-- Scrollbar -->
<rect x="34" y="1021.5" width="1536" height="15.5" fill="#383838"/>
<rect x="34" y="1037" width="1537" height="1" fill="#555"/>
<rect x="34.5" y="1022.5" width="15" height="14" fill="#3a3a3a" stroke="#5e5e5e"/>
<path d="M44.5 1026v6l-4-3z" fill="#666"/>
<rect x="1554.5" y="1022.5" width="15" height="14" fill="#3a3a3a" stroke="#5e5e5e"/>
<path d="M1560 1026v6l4-3z" fill="#666"/>
</svg>
</body>
</html>
